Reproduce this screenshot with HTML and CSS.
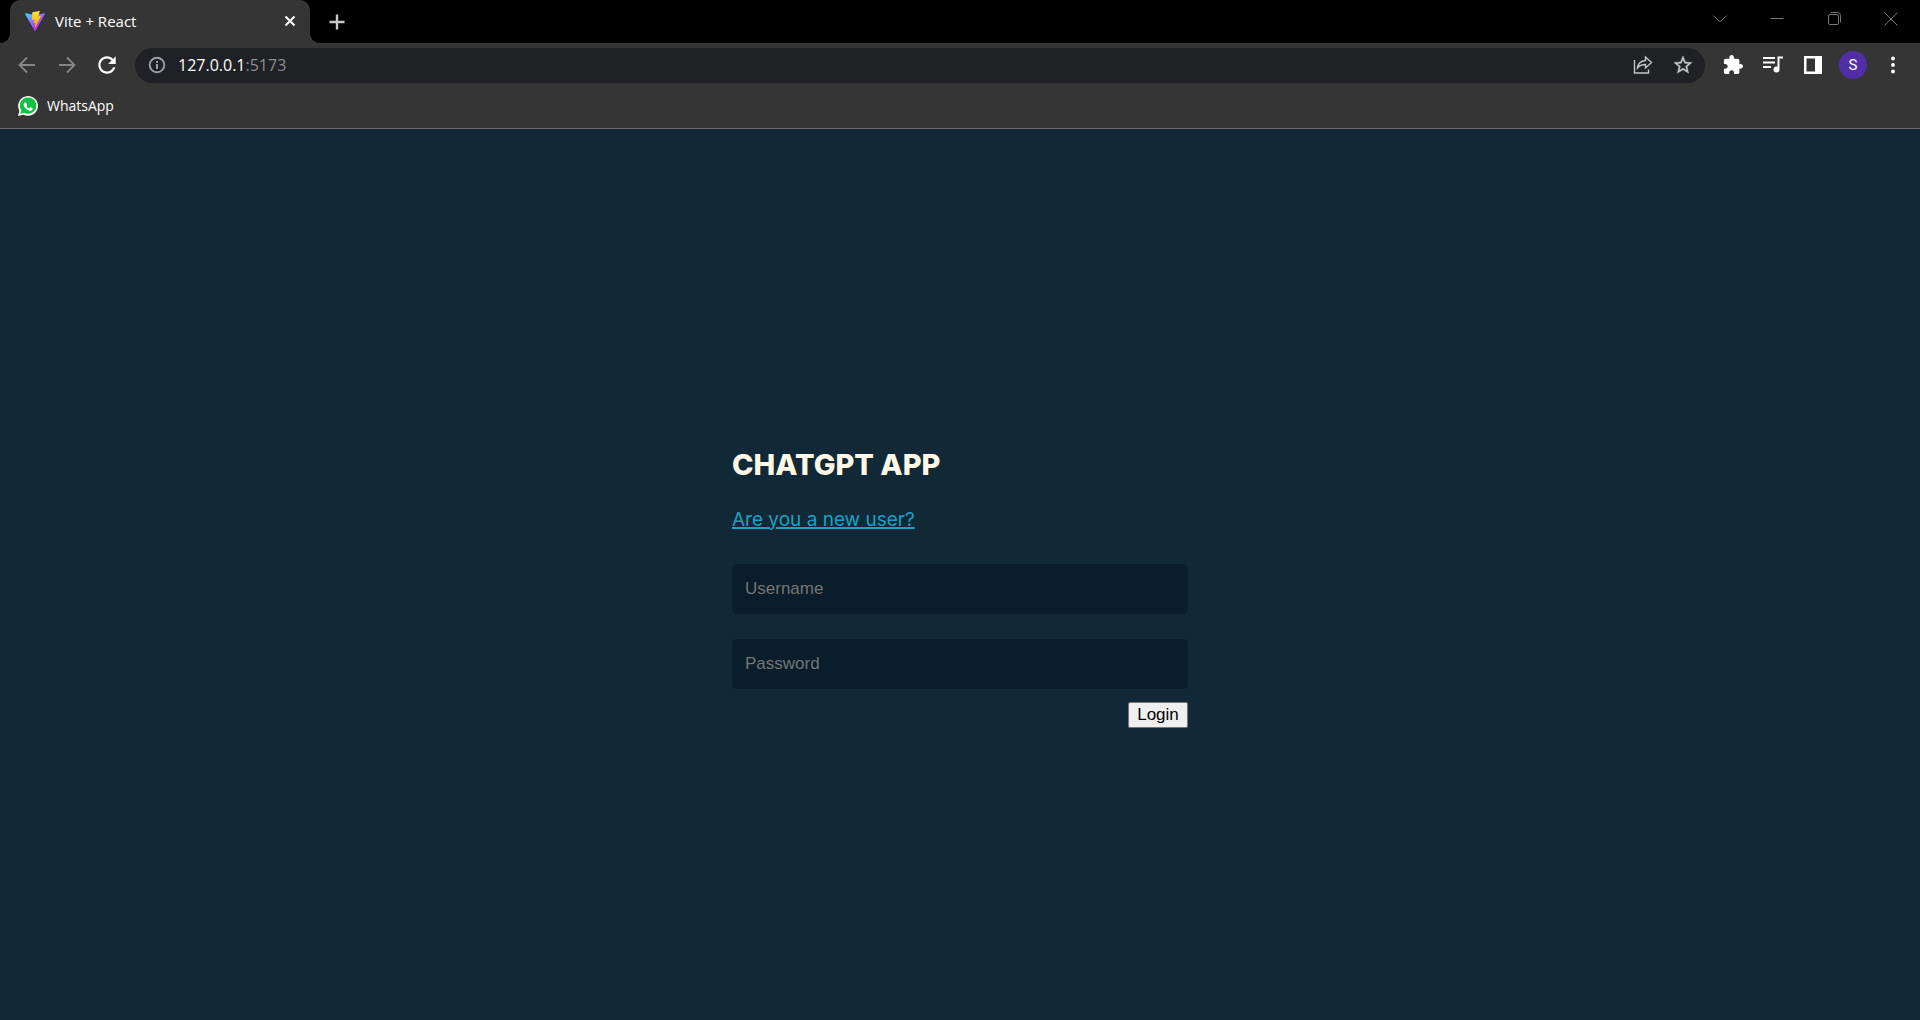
FILE: index.html
```html
<!DOCTYPE html>
<html lang="en">
<head>
<meta charset="utf-8">
<title>Vite + React</title>
<link rel="stylesheet" href="styles.css">
</head>
<body>
<header class="browser">
  <div class="tab-strip">
    <div class="tab">
      <svg class="icon-20" viewBox="0 0 256 257" aria-hidden="true">
        <defs>
          <linearGradient id="vite-body" x1="0" y1="0.08" x2="0.57" y2="0.78"><stop offset="0" stop-color="#41d1ff"/><stop offset="1" stop-color="#bd34fe"/></linearGradient>
          <linearGradient id="vite-bolt" x1="0.43" y1="0.02" x2="0.5" y2="0.9"><stop offset="0" stop-color="#ffea83"/><stop offset="0.08" stop-color="#ffdd35"/><stop offset="1" stop-color="#ffa800"/></linearGradient>
        </defs>
        <path fill="url(#vite-body)" d="M255.153 37.938L134.897 252.976c-2.483 4.44-8.862 4.466-11.382.048L.875 37.958c-2.746-4.814 1.371-10.646 6.827-9.67l120.385 21.517a6.537 6.537 0 0 0 2.322-.004l117.867-21.483c5.438-.991 9.574 4.796 6.877 9.62Z"/>
        <path fill="url(#vite-bolt)" d="M185.432.063L96.44 17.501a3.268 3.268 0 0 0-2.634 3.014l-5.474 92.456a3.268 3.268 0 0 0 3.997 3.378l24.777-5.718c2.318-.535 4.413 1.507 3.936 3.838l-7.361 36.047c-.495 2.426 1.782 4.5 4.151 3.78l15.304-4.649c2.372-.72 4.652 1.36 4.15 3.788l-11.698 56.621c-.732 3.542 3.979 5.473 5.943 2.437l1.313-2.028l72.516-144.72c1.215-2.423-.88-5.186-3.54-4.672l-25.505 4.922c-2.396.462-4.435-1.77-3.759-4.114l16.646-57.705c.677-2.35-1.37-4.583-3.769-4.113Z"/>
      </svg>
      <span class="tab-title">Vite + React</span>
      <button class="tab-close" type="button" aria-label="Close tab"><svg class="icon-20" viewBox="0 0 20 20"><path d="M5.5 5.5l9 9M14.5 5.5l-9 9" stroke="#fff" stroke-width="2"/></svg></button>
    </div>
    <button class="new-tab" type="button" aria-label="New tab"><svg class="icon-20" viewBox="0 0 20 20"><path d="M10 2.5v15M2.5 10h15" stroke="#c8c8c8" stroke-width="2.4"/></svg></button>
    <div class="window-controls">
      <button type="button" aria-label="Search tabs"><svg class="icon-20" viewBox="0 0 20 20"><path d="M3.5 6.5l6.5 6.5 6.500-6.500"/></svg></button>
      <button type="button" aria-label="Minimize"><svg class="icon-20" viewBox="0 0 20 20"><path d="M3.500 9.500h13"/></svg></button>
      <button type="button" aria-label="Restore"><svg class="icon-20" viewBox="0 0 20 20"><rect x="4.500" y="5.500" width="10" height="10" rx="1.500"/><path d="M6.500 3.500h7a3 3 0 0 1 3 3v7"/></svg></button>
      <button type="button" aria-label="Close"><svg class="icon-20" viewBox="0 0 20 20"><path d="M3.500 3.500l13 13M16.500 3.500l-13 13"/></svg></button>
    </div>
  </div>

  <div class="toolbar">
    <button class="tool dim" type="button" aria-label="Back"><svg class="icon-24" viewBox="0 0 24 24"><path d="M20 12H5M12 4.500L4.500 12l7.500 7.500" fill="none" stroke="currentColor" stroke-width="1.800"/></svg></button>
    <button class="tool dim" type="button" aria-label="Forward"><svg class="icon-24" viewBox="0 0 24 24"><path d="M4 12h15M12 4.500l7.500 7.500-7.500 7.500" fill="none" stroke="currentColor" stroke-width="1.800"/></svg></button>
    <button class="tool" type="button" aria-label="Reload"><svg class="icon-26" viewBox="0 0 24 24"><path fill="currentColor" d="M17.65 6.350C16.200 4.900 14.210 4 12 4c-4.420 0-7.990 3.580-7.990 8s3.570 8 7.990 8c3.730 0 6.840-2.550 7.730-6h-2.080c-.82 2.330-3.040 4-5.650 4-3.310 0-6-2.690-6-6s2.690-6 6-6c1.660 0 3.140.69 4.220 1.780L13 11h7V4l-2.350 2.350z"/></svg></button>
    <div class="address">
      <svg class="icon-20 info" viewBox="0 0 20 20" aria-hidden="true"><circle cx="10" cy="10" r="7.300" fill="none" stroke="currentColor" stroke-width="1.900"/><path d="M10 9v5M10 6v1.800" stroke="currentColor" stroke-width="2"/></svg>
      <span class="url">127.0.0.1<span class="port">:5173</span></span>
      <button class="tool soft" type="button" aria-label="Share"><svg class="icon-20" viewBox="0 0 20 20"><path d="M1.500 5v13h14v-3.500M12.500 2l6 5.500-6 5.500v-3.500c-3.500 0-6 1-8 3.500.5-4.500 3.500-7 8-7.500z" fill="none" stroke="currentColor" stroke-width="1.400"/></svg></button>
      <button class="tool soft" type="button" aria-label="Bookmark this page"><svg class="icon-22" viewBox="0 0 24 24"><path fill="currentColor" stroke="currentColor" stroke-width="0.400" d="M22 9.240l-7.190-.62L12 2 9.190 8.630 2 9.240l5.460 4.730L5.820 21 12 17.270 18.180 21l-1.630-7.030L22 9.240zM12 15.400l-3.760 2.270 1-4.280-3.320-2.880 4.380-.38L12 6.100l1.710 4.040 4.380.38-3.320 2.880 1 4.280L12 15.400z"/></svg></button>
    </div>
    <button class="tool" type="button" aria-label="Extensions"><svg class="icon-20" viewBox="1 1 22 22"><path fill="currentColor" d="M20.500 11H19V7c0-1.100-.9-2-2-2h-4V3.500C13 2.120 11.880 1 10.500 1S8 2.120 8 3.500V5H4c-1.100 0-1.990.9-1.990 2v3.800H3.500c1.490 0 2.700 1.210 2.700 2.700s-1.210 2.700-2.700 2.700H2V20c0 1.100.9 2 2 2h3.800v-1.500c0-1.490 1.210-2.700 2.700-2.700s2.700 1.210 2.700 2.700V22H17c1.100 0 2-.9 2-2v-4h1.500c1.380 0 2.500-1.120 2.500-2.500S21.880 11 20.500 11z"/></svg></button>
    <button class="tool" type="button" aria-label="Media controls"><svg class="icon-20" viewBox="0 0 20 20"><path d="M0 3h12M0 7.500h12M0 12h8" stroke="currentColor" stroke-width="1.800"/><path d="M20 2.500h-4.500V13" fill="none" stroke="currentColor" stroke-width="2"/><circle cx="13.500" cy="14.500" r="3" fill="currentColor"/></svg></button>
    <button class="tool" type="button" aria-label="Side panel"><svg class="icon-20" viewBox="0 0 20 20"><path fill="currentColor" fill-rule="evenodd" d="M1 1h18v18H1zM3.500 3.500v13H12v-13z"/></svg></button>
    <button class="tool" type="button" aria-label="Profile"><span class="avatar">S</span></button>
    <button class="tool" type="button" aria-label="Menu"><svg class="icon-20" viewBox="0 0 20 20" fill="currentColor"><circle cx="10" cy="3.500" r="1.900"/><circle cx="10" cy="10" r="1.900"/><circle cx="10" cy="16.500" r="1.900"/></svg></button>
  </div>

  <nav class="bookmarks">
    <a class="bookmark" href="#whatsapp">
      <svg class="icon-20" viewBox="0 0 24 24" aria-hidden="true"><path fill="#fff" d="M0 24l1.700-6.200A11.900 11.900 0 1 1 6.400 22.400z"/><path fill="#12c143" d="M2.800 21.200l1.100-4.100a9.900 9.900 0 1 1 3.200 3z"/><path fill="#fff" d="M17.500 14.400c-.3-.2-1.800-.9-2-1-.3-.1-.5-.1-.7.2l-.9 1.100c-.2.200-.4.200-.7.100-1.200-.6-2.100-1.100-3-2.600-.2-.4.2-.4.600-1.200.1-.2 0-.4 0-.5l-.9-2.200c-.3-.6-.5-.5-.7-.5h-.6c-.2 0-.5.100-.8.400-.9.900-1.200 2.100-.8 3.200.4 1.500 1.200 2.500 2.300 3.700 1.700 1.700 3.100 2.300 4.600 2.700 1.100.3 3-.5 3.400-1.500.2-.6.400-1.400.2-1.900z"/></svg>
      <span>WhatsApp</span>
    </a>
  </nav>
</header>

<main class="page">
  <form class="login">
    <h2 class="title">CHATGPT APP</h2>
    <a class="switch" href="#register">Are you a new user?</a>
    <input class="field" type="text" placeholder="Username" aria-label="Username">
    <input class="field" type="password" placeholder="Password" aria-label="Password">
    <button class="submit" type="button">Login</button>
  </form>
</main>
</body>
</html>
```
FILE: styles.css
```css
* { box-sizing: border-box; }

body {
  margin: 0;
  min-height: 100vh;
  display: flex;
  flex-direction: column;
  background: #112936;
  color: #fff;
  font-family: "Open Sans", "Noto Sans", sans-serif;
}

button {
  padding: 0;
  border: 0;
  background: none;
  color: inherit;
  font: inherit;
}

svg { display: block; flex: none; }
.icon-20 { width: 20px; height: 20px; }
.icon-22 { width: 22px; height: 22px; }
.icon-24 { width: 24px; height: 24px; }
.icon-26 { width: 26px; height: 26px; }

.browser {
  background: #353535;
  border-bottom: 1px solid #6b6b6b;
}

/* Tab strip */
.tab-strip {
  display: flex;
  height: 43px;
  padding-left: 10px;
  background: #000;
}

.tab {
  position: relative;
  display: flex;
  align-items: center;
  gap: 10px;
  width: 300px;
  padding: 0 10px 2px 15px;
  background: #353535;
  border-radius: 10px 10px 0 0;
}

.tab::before,
.tab::after {
  content: "";
  position: absolute;
  bottom: 0;
  width: 10px;
  height: 10px;
}

.tab::before {
  right: 100%;
  background: radial-gradient(circle at 0 0, #000 10px, #353535 10px);
}

.tab::after {
  left: 100%;
  background: radial-gradient(circle at 100% 0, #000 10px, #353535 10px);
}

.tab-title { flex: 1; font-size: 15px; line-height: 20px; }

.new-tab {
  display: flex;
  align-items: center;
  justify-content: center;
  width: 36px;
  margin-left: 9px;
}

.window-controls {
  display: flex;
  margin-left: auto;
  height: 37px;
  padding-right: 1px;
}

.window-controls button {
  display: flex;
  align-items: center;
  justify-content: center;
  width: 57px;
}

.window-controls svg {
  fill: none;
  stroke: #777;
  stroke-width: 1;
}

/* Toolbar */
.toolbar {
  display: flex;
  align-items: center;
  height: 44px;
  padding: 0 7px;
}

.tool {
  display: flex;
  align-items: center;
  justify-content: center;
  flex: none;
  width: 40px;
  height: 36px;
}

.dim { color: #868686; }
.soft { color: #c4c5c6; }

.address {
  display: flex;
  align-items: center;
  flex: 1;
  height: 35px;
  margin: 0 8px;
  padding: 0 2px 0 12px;
  border-radius: 18px;
  background: #202124;
}

.info { color: #9aa0a6; }
.url { flex: 1; margin-left: 11px; font-size: 16px; line-height: 22px; }
.port { color: #8b8d90; }

.avatar {
  width: 28px;
  height: 28px;
  border-radius: 50%;
  background: #512da8;
  font: 15px/28px Roboto, sans-serif;
  text-align: center;
}

/* Bookmarks bar */
.bookmarks {
  display: flex;
  align-items: flex-start;
  height: 41px;
  padding: 9px 18px;
}

.bookmark {
  display: flex;
  align-items: center;
  gap: 9px;
  color: #fff;
  font-size: 14px;
  line-height: 20px;
  text-decoration: none;
}

/* Login page */
.page {
  display: flex;
  flex: 1;
  align-items: center;
  justify-content: center;
  font-family: Inter, Roboto, sans-serif;
}

.login {
  display: flex;
  flex-direction: column;
  align-items: flex-start;
  width: 456px;
  max-width: 100%;
}

.title {
  margin: 25px 0;
  color: #fff8e6;
  font-size: 29px;
  line-height: 36px;
  font-weight: 800;
}

.switch {
  margin-bottom: 32px;
  color: #1d9fc4;
  font-size: 19px;
  line-height: 24px;
  text-decoration-thickness: 2px;
}

.field {
  width: 100%;
  height: 50px;
  margin-bottom: 25px;
  padding: 0 13px;
  border: 0;
  border-radius: 5px;
  background: #091d2a;
  color: #fff;
  font: 17px/20px "Liberation Sans", Arial, sans-serif;
}

.field + .submit { margin-top: -12px; }
.field::placeholder { color: #757575; }

.submit {
  align-self: flex-end;
  width: 60px;
  height: 26px;
  border: 1px solid #767676;
  border-radius: 2px;
  background: #efefef;
  color: #000;
  font: 17px/20px "Liberation Sans", Arial, sans-serif;
}
```
